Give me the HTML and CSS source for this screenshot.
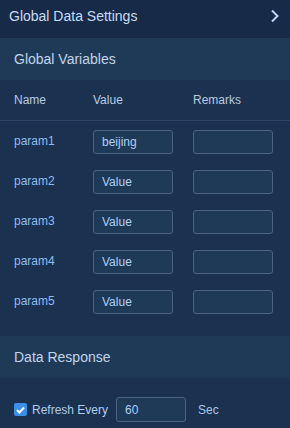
FILE: index.html
```html
<!DOCTYPE html>
<html lang="en">
<head>
    <meta charset="UTF-8">
    <meta name="viewport" content="width=device-width, initial-scale=1.0">
    <title>Global Data Settings</title>
    <link rel="stylesheet" href="styles.css">
</head>
<body>
    <div class="panel">
        <div class="panel-header">
            <span>Global Data Settings</span>
            <svg class="chevron" width="10" height="14" viewBox="0 0 10 14">
                <path d="M2 1.5 L7.5 7 L2 12.5" fill="none" stroke="#b9d5f6" stroke-width="2"/>
            </svg>
        </div>

        <div class="section-title">Global Variables</div>
        <div class="vars">
            <div class="row head">
                <div>Name</div>
                <div>Value</div>
                <div>Remarks</div>
            </div>
            <div class="row">
                <div class="name">param1</div>
                <input class="field" type="text" value="beijing">
                <input class="field" type="text" value="">
            </div>
            <div class="row">
                <div class="name">param2</div>
                <input class="field" type="text" value="Value">
                <input class="field" type="text" value="">
            </div>
            <div class="row">
                <div class="name">param3</div>
                <input class="field" type="text" value="Value">
                <input class="field" type="text" value="">
            </div>
            <div class="row">
                <div class="name">param4</div>
                <input class="field" type="text" value="Value">
                <input class="field" type="text" value="">
            </div>
            <div class="row">
                <div class="name">param5</div>
                <input class="field" type="text" value="Value">
                <input class="field" type="text" value="">
            </div>
        </div>

        <div class="section-title">Data Response</div>
        <div class="refresh">
            <label class="check">
                <span class="box">
                    <svg width="9" height="8" viewBox="0 0 9 8">
                        <path d="M1 4 L3.5 6.5 L8 1.5" fill="none" stroke="#fff" stroke-width="2"/>
                    </svg>
                </span>
                Refresh Every
            </label>
            <input class="field small" type="text" value="60">
            <span class="unit">Sec</span>
        </div>
    </div>
</body>
</html>
```

FILE: styles.css
```css
body {
    margin: 0;
    background: #1b3150;
    font-family: "Liberation Sans", Arial, sans-serif;
}
.panel {
    width: 290px;
    height: 428px;
    background: #1b3150;
    overflow: hidden;
}
.panel-header {
    height: 38px;
    padding: 0 10px 7px 9px;
    box-sizing: border-box;
    display: flex;
    align-items: center;
    justify-content: space-between;
    background: #172a48;
    color: #c9dbf3;
    font-size: 14px;
}
.section-title {
    height: 42px;
    padding-left: 14px;
    display: flex;
    align-items: center;
    background: #1f3a57;
    color: #c2d4eb;
    font-size: 14px;
}
.vars {
    padding-bottom: 15px;
}
.row {
    display: grid;
    grid-template-columns: 79px 100px 80px;
    align-items: center;
    height: 40px;
    padding-left: 14px;
    font-size: 12px;
}
.row.head {
    height: 40px;
    color: #b9cbe0;
    border-bottom: 1px solid #2c4866;
}
.name {
    color: #8fbdf0;
    margin-top: -1px;
}
.field {
    box-sizing: border-box;
    width: 80px;
    height: 24px;
    margin: 2px 0 0;
    padding: 0 8px;
    background: #1f3a57;
    border: 1px solid #4a6482;
    border-radius: 3px;
    color: #acd0f8;
    font-family: "Liberation Sans", Arial, sans-serif;
    font-size: 12px;
    outline: none;
}
.refresh {
    display: flex;
    align-items: center;
    padding: 19px 0 0 14px;
    font-size: 12px;
    color: #b0cdee;
}
.check {
    display: flex;
    align-items: center;
    gap: 5px;
    margin-right: 8px;
}
.box {
    width: 13px;
    height: 13px;
    border-radius: 2px;
    background: #3b8fe8;
    display: flex;
    align-items: center;
    justify-content: center;
}
.field.small {
    width: 70px;
    height: 25px;
    margin: 0;
}
.unit {
    margin-left: 12px;
    color: #a9c6e8;
}
```
